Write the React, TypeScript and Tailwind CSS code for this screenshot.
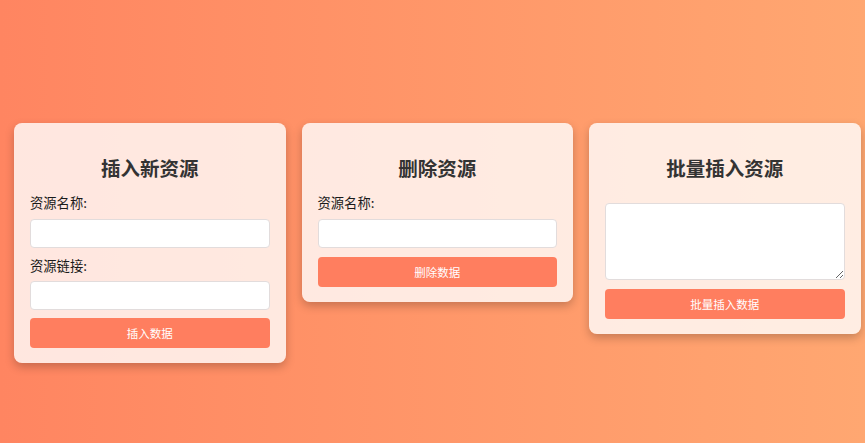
import React from "react";

const font = { fontFamily: '"Noto Sans CJK SC", "Noto Sans", sans-serif' };

function Title({ children }: { children: React.ReactNode }) {
  return (
    <h2 className="text-center text-[19.5px] leading-[24px] font-bold text-[#333]">{children}</h2>
  );
}

function Label({ children, className = "" }: { children: React.ReactNode; className?: string }) {
  return <label className={"block text-[13.3px] leading-[20px] text-[#1a1a1a] " + className}>{children}</label>;
}

function Input({ className = "" }: { className?: string }) {
  return (
    <input
      type="text"
      className={"block w-full h-[29px] rounded-[4px] border border-[#e2dcdc] bg-white px-2 outline-none " + className}
    />
  );
}

function Button({ children, className = "" }: { children: React.ReactNode; className?: string }) {
  return (
    <button
      className={"block w-full h-[30px] rounded-[4px] bg-[#ff7e5f] text-white text-[11.5px] leading-[30px] " + className}
    >
      {children}
    </button>
  );
}

const card = "w-[271.5px] shrink-0 rounded-lg bg-white/80 px-4 pt-[33px] pb-[15px] shadow-[0_4px_10px_rgba(0,0,0,0.22)]";

export default function App() {
  return (
    <div
      style={font}
      className="w-full h-[443px] overflow-hidden bg-gradient-to-r from-[#ff8561] to-[#ffa771]"
    >
      <div className="flex items-start gap-4 pl-[14px] pt-[123px]">
        <div className={card}>
          <Title>插入新资源</Title>
          <Label className="mt-[13px]">资源名称:</Label>
          <Input className="mt-[6px]" />
          <Label className="mt-[8px]">资源链接:</Label>
          <Input className="mt-[5px]" />
          <Button className="mt-[8px]">插入数据</Button>
        </div>
        <div className={card}>
          <Title>删除资源</Title>
          <Label className="mt-[13px]">资源名称:</Label>
          <Input className="mt-[6px]" />
          <Button className="mt-[9px]">删除数据</Button>
        </div>
        <div className={card}>
          <Title>批量插入资源</Title>
          <textarea className="mt-[23px] block w-full h-[77px] rounded-[4px] border border-[#e2dcdc] bg-white p-2 outline-none" />
          <Button className="mt-[9px]">批量插入数据</Button>
        </div>
      </div>
    </div>
  );
}
